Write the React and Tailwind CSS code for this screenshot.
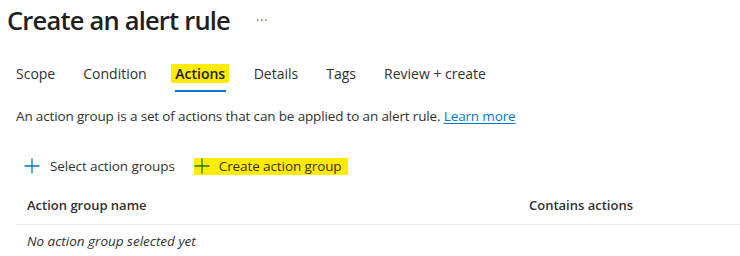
import React from 'react';

const tabs = ['Scope', 'Condition', 'Actions', 'Details', 'Tags', 'Review + create'];

const Plus = ({ className }) => (
  <svg viewBox="0 0 16 16" className={className} fill="none" stroke="currentColor" strokeWidth="1.3">
    <path d="M8 0.5v15M0.5 8h15" />
  </svg>
);

export default function App() {
  return (
    <div className="w-[740px] h-[256px] bg-white overflow-hidden text-[#323130]" style={{ fontFamily: '"Segoe UI", "Open Sans", sans-serif' }}>
      <div className="flex items-center pl-[7px] pt-[3px] h-[38px]">
        <h1 className="text-[25.5px] font-semibold tracking-[-0.8px] text-[#201f1e] leading-none">Create an alert rule</h1>
        <span className="ml-[26px] text-[12px] tracking-[1px] text-[#605e5c] leading-none">···</span>
      </div>

      <div className="flex pl-[16px] mt-[26px] h-[33px] text-[14px]">
        {tabs.map((t) => (
          <div key={t} className="mr-[28px] flex flex-col items-center">
            {t === 'Actions' ? (
              <span className="bg-[#ffec00] px-[4px] -mx-[4px] font-semibold text-[#201f1e] leading-[19px]">{t}</span>
            ) : (
              <span className="leading-[19px]">{t}</span>
            )}
            {t === 'Actions' && <div className="mt-[7px] h-[2px] w-[51px] bg-[#0078d4] self-end" />}
          </div>
        ))}
      </div>

      <p className="pl-[16px] mt-[10px] text-[13.5px] tracking-[-0.15px] leading-[18px]">
        An action group is a set of actions that can be applied to an alert rule.{' '}
        <span className="text-[#0078d4] underline underline-offset-2">Learn more</span>
      </p>

      <div className="flex items-center pl-[24px] mt-[31px] h-[20px] text-[13.5px] tracking-[-0.1px]">
        <Plus className="w-[16px] h-[16px] text-[#0078d4]" />
        <span className="ml-[10px]">Select action groups</span>
        <div className="ml-[19px] flex items-center bg-[#ffec00] h-[17px] pr-[6px]">
          <Plus className="w-[16px] h-[16px] text-[#107c10]" />
          <span className="ml-[9px]">Create action group</span>
        </div>
      </div>

      <div className="ml-[16px] mt-[20px] flex pb-[10px] leading-[18px] border-b border-[#edebe9] text-[13px] font-semibold">
        <div className="w-[513px] pl-[11px]">Action group name</div>
        <div>Contains actions</div>
      </div>
      <div className="pl-[27px] mt-[7px] leading-[18px] text-[13.5px] italic">No action group selected yet</div>
    </div>
  );
}
